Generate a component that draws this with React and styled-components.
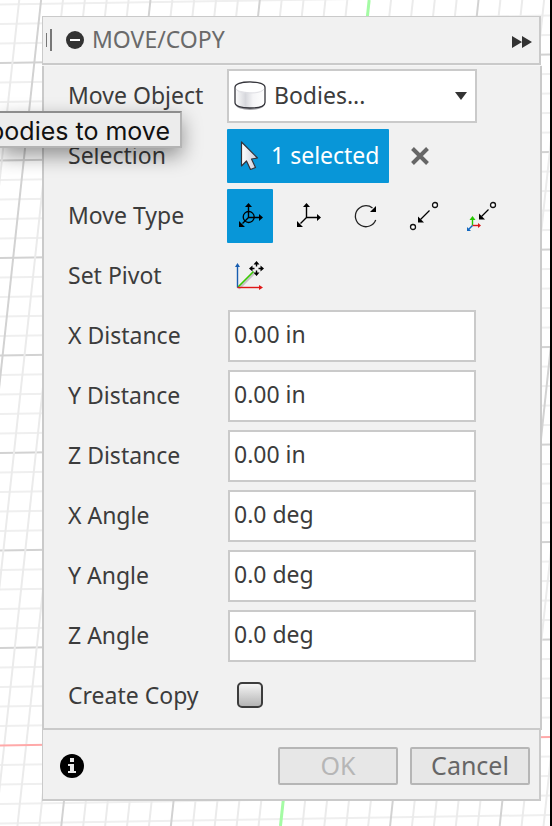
import React, { useId, useState } from "react";
import styled, { createGlobalStyle, css } from "styled-components";

const GlobalStyle = createGlobalStyle`
  *, *::before, *::after { box-sizing: border-box; }
  body {
    margin: 0;
    background: #fff;
    color: #3c3c3c;
    font-family: "Noto Sans", "Open Sans", sans-serif;
    font-size: 23px;
    line-height: 28px;
  }
  button, input, select { font: inherit; color: inherit; }
`;

const Workspace = styled.main`
  position: relative;
  min-height: 100vh;
  padding: 16px 8px 24px 42px;
  border-right: 2px solid #000;
  overflow: hidden;
`;

const GridBackdrop = styled.svg`
  position: absolute;
  inset: 0;
  width: 100%;
  height: 100%;
`;

const Panel = styled.section`
  position: relative;
  display: flex;
  flex-direction: column;
`;

const Header = styled.header`
  display: flex;
  align-items: center;
  height: 49px;
  margin-right: 1px;
  padding: 0 7px 0 3px;
  background: #f1f1f1;
  border: solid #cacaca;
  border-width: 1px 2px 2px 1px;
`;

const Title = styled.h1`
  flex: 1;
  margin: 0 0 0 8px;
  padding-bottom: 2px;
  color: #6a6a6a;
  font-size: 23px;
  font-weight: 400;
  line-height: 28px;
`;

const PlainButton = styled.button`
  display: flex;
  padding: 0;
  border: 0;
  background: none;
  cursor: pointer;
`;

const DockButton = styled(PlainButton)`
  padding-top: 3px;
`;

const Grip = styled.span`
  display: flex;
  align-items: center;
  width: 6px;
  height: 22px;
  margin-right: 14px;
  border-right: 2px solid #777;

  &::before {
    content: "";
    width: 1px;
    height: 14px;
    background: #777;
  }
`;

const Body = styled.div`
  display: flex;
  flex-direction: column;
  margin-top: 1px;
  padding: 0 63px 2px 24px;
  background: #f1f1f1;
  border: 2px solid #cacaca;
  border-top: 0;
  box-shadow: 0 -1px #f6f6f6;
`;

const Row = styled.div`
  display: grid;
  grid-template-columns: 159px minmax(0, 1fr);
  align-items: center;
  height: 60px;
`;

const RowLabel = styled.label`
  padding-bottom: 2px;
  white-space: nowrap;
`;

const Controls = styled.div`
  display: flex;
  align-items: center;
  gap: ${(p) => p.$gap || 0}px;
`;

const SelectFrame = styled.div`
  display: flex;
  align-items: center;
  flex: 1;
  height: 54px;
  padding: 0 8px 0 5px;
  background: #fff;
  border: 2px solid #cacaca;
`;

const Select = styled.select`
  flex: 1;
  min-width: 0;
  height: 100%;
  margin-left: 8px;
  padding: 0 0 2px;
  border: 0;
  background: transparent;
  appearance: none;
`;

const Field = styled.input`
  flex: 1;
  min-width: 0;
  height: 52px;
  margin: 0 1px;
  padding: 0 4px 4px;
  background: #fff;
  border: 2px solid #cacaca;
`;

const SelectionButton = styled.button`
  display: flex;
  align-items: center;
  gap: 10px;
  width: 162px;
  height: 54px;
  padding: 0 0 0 12px;
  border: 0;
  border-radius: 1px;
  background: #0896d8;
  color: #fff;
  white-space: nowrap;
`;

const SelectionText = styled.span`
  padding-bottom: 2px;
`;

const ToolButton = styled.button`
  display: flex;
  flex: none;
  align-items: center;
  justify-content: center;
  width: 46px;
  height: 54px;
  padding: 0;
  border: 0;
  border-radius: 1px;
  background: transparent;
  ${(p) => p.$active && css`background: #0896d8;`}
`;

const Checkbox = styled.input`
  appearance: none;
  width: 26px;
  height: 26px;
  margin: 0 0 2px 10px;
  border: 2px solid #3c3c3c;
  border-radius: 5px;
  background: linear-gradient(#f4f4f4, #b4b4b4);

  &:checked { background: #0896d8; }
`;

const Footer = styled.footer`
  display: flex;
  align-items: center;
  gap: 12px;
  height: 71px;
  margin-right: 1px;
  padding: 2px 9px 0 17px;
  background: #f1f1f1;
  border: solid #cacaca;
  border-width: 0 2px 2px 1px;
`;

const InfoButton = styled(PlainButton)`
  margin-right: auto;
`;

const FooterButton = styled.button`
  width: 120px;
  height: 38px;
  padding: 0 0 2px;
  border: 2px solid #b6b6b6;
  border-radius: 2px;
  background: #e7e7e7;
  color: #666;
  font-size: 25px;
  line-height: 32px;

  &:disabled { color: #b6b6b6; }
`;

const Tooltip = styled.div`
  position: absolute;
  top: 111px;
  left: 0;
  display: flex;
  justify-content: flex-end;
  width: 182px;
  height: 37px;
  padding: 2px 10px 0 0;
  background: #ececec;
  border: 2px solid #b4b4b4;
  border-top-color: #8d8d8d;
  border-left: 0;
  box-shadow: 0 8px 20px rgba(0, 0, 0, 0.4);
  color: #111;
  font-family: Inter, "Liberation Sans", sans-serif;
  font-size: 25px;
  line-height: 32px;
  white-space: nowrap;
`;

const gridRows = Array.from({ length: 45 }, (_, i) => i - 39);
const gridColumns = Array.from({ length: 32 }, (_, i) => i - 18);

function Perspective() {
  return (
    <GridBackdrop viewBox="0 0 552 826" preserveAspectRatio="none" aria-hidden="true">
      {gridRows.filter((k) => k !== 0).map((k) => (
        <path
          key={k}
          d={`M0 ${745.5 + 19.5 * k}L552 ${737 + 19.5 * k}`}
          stroke={k % 5 === 0 ? "#d2d2d2" : "#efefef"}
          strokeWidth="2"
        />
      ))}
      {gridColumns.filter((k) => k !== 0).map((k) => (
        <path
          key={k}
          d={`M${370.5 + 21.95 * k} 0L${281.5 + 22 * k} 826`}
          stroke={k % 5 === 0 ? "#d2d2d2" : "#ebebeb"}
          strokeWidth="2"
        />
      ))}
      <path d="M0 745.5L552 737" stroke="#ffa9a9" strokeWidth="2" />
      <path d="M370.5 0L281.5 826" stroke="#a4fba4" strokeWidth="3" />
    </GridBackdrop>
  );
}

const CollapseIcon = () => (
  <svg width="18" height="18" viewBox="0 0 18 18" aria-hidden="true">
    <circle cx="9" cy="9" r="9" fill="#333" />
    <path d="M4 9h10" stroke="#fff" strokeWidth="2" />
  </svg>
);

const ForwardIcon = () => (
  <svg width="20" height="12" viewBox="0 0 20 12" aria-hidden="true">
    <path d="M0 0l10 6-10 6zM10 0l10 6-10 6z" fill="#333" />
  </svg>
);

const BodyIcon = () => (
  <svg width="32" height="30" viewBox="0 0 32 30" aria-hidden="true">
    <defs>
      <linearGradient id="cylinder">
        <stop offset="0" stopColor="#fff" />
        <stop offset="0.35" stopColor="#d6d7dc" />
        <stop offset="0.6" stopColor="#f5f5f7" />
        <stop offset="1" stopColor="#fff" />
      </linearGradient>
    </defs>
    <ellipse cx="16" cy="24" rx="14" ry="5" fill="#a3a3a8" />
    <path d="M1 6.5C1 3 7 1 16 1s15 2 15 5.5v15C31 25 25 27 16 27S1 25 1 21.5z" fill="url(#cylinder)" stroke="#34343a" strokeWidth="1.3" />
    <ellipse cx="16" cy="6.5" rx="14" ry="4.7" fill="#fff" />
    <path d="M2 8c2 3 7 4 14 4s12-1 14-4" fill="none" stroke="#e1e1e6" />
  </svg>
);

const CursorIcon = () => (
  <svg width="22" height="30" viewBox="0 0 22 30" aria-hidden="true">
    <defs>
      <linearGradient id="cursor">
        <stop offset="0" stopColor="#fff" />
        <stop offset="1" stopColor="#c8cad8" />
      </linearGradient>
    </defs>
    <path d="M2.5 1v24l5-5 4 8.500 5-2-4-8.500 6-1z" fill="url(#cursor)" stroke="#32323a" strokeWidth="1.2" strokeLinejoin="round" />
  </svg>
);

const CloseIcon = () => (
  <svg width="18" height="18" viewBox="0 0 18 18" aria-hidden="true">
    <path d="M1.5 1.5l15 15M16.5 1.5l-15 15" stroke="#666" strokeWidth="4" />
  </svg>
);

const CaretIcon = () => (
  <svg width="12" height="8" viewBox="0 0 12 8" aria-hidden="true">
    <path d="M0 0h12L6 8z" fill="#333" />
  </svg>
);

const Axes = ({ ring }) => (
  <svg width="30" height="30" viewBox="0 0 30 30" aria-hidden="true">
    <g fill="none" stroke="#000" strokeWidth="1.4">
      <path d="M13.5 5v11.5H24M13.5 16.500l-6 6" />
      {ring && <circle cx="13.7" cy="16" r="5.5" strokeWidth="1.3" />}
    </g>
    <path d="M10 6l3.500-4L17 6zM24 13l4 3.500-4 3.500zM4 20v6h6z" />
  </svg>
);

const RotateIcon = () => (
  <svg width="30" height="30" viewBox="0 0 30 30" aria-hidden="true">
    <path d="M24.700 19A10.500 10.500 0 1 1 21.500 7" fill="none" stroke="#222" strokeWidth="1.3" />
    <path d="M25 5v6h-6z" />
  </svg>
);

const PointIcon = () => (
  <svg width="30" height="30" viewBox="0 0 30 30" aria-hidden="true">
    <circle cx="26" cy="4" r="2.5" fill="#fff" stroke="#111" strokeWidth="1.3" />
    <circle cx="4" cy="26" r="2.5" fill="#fff" stroke="#111" strokeWidth="1.3" />
    <path d="M20.500 9.500l-9 9" stroke="#000" strokeWidth="1.2" />
    <path d="M9 15.500v6h6z" />
  </svg>
);

const PointPositionIcon = () => (
  <svg width="30" height="30" viewBox="0 0 30 30" aria-hidden="true">
    <circle cx="26" cy="4" r="2.5" fill="#fff" stroke="#111" strokeWidth="1.3" />
    <path d="M21.500 8.500l-7 7" stroke="#000" strokeWidth="1.2" />
    <path d="M12 12.500v6h6z" />
    <path d="M5.500 24.500V18" stroke="#26c800" strokeWidth="1.4" />
    <path d="M2.500 19l3-4 3 4z" fill="#26c800" />
    <path d="M5.500 24.500H11" stroke="#d91717" strokeWidth="1.4" />
    <path d="M11 22l3 2.500-3 2.500z" fill="#d91717" />
    <path d="M5.500 24.500l-4 4" stroke="#1468c0" strokeWidth="1.4" />
    <path d="M0 26v4h4z" fill="#1468c0" />
  </svg>
);

const PivotIcon = () => (
  <svg width="32" height="32" viewBox="0 0 32 32" aria-hidden="true">
    <path d="M4.500 28.500L20 13" stroke="#c4c4c4" strokeWidth="3" />
    <path d="M3.500 27.500L19.500 11.500" stroke="#38cc00" strokeWidth="1.6" />
    <path d="M3.500 27.500V6" stroke="#175db0" strokeWidth="1.4" />
    <path d="M1 7l2.500-4L6 7z" fill="#175db0" />
    <path d="M3.500 27.500H26" stroke="#df1717" strokeWidth="1.4" />
    <path d="M25 25l4 2.500-4 2.500z" fill="#df1717" />
    <path d="M22.500 3v3.500M22.500 10.500V14M17 8.500h3.500M24.500 8.500H28" stroke="#000" strokeWidth="1.4" />
    <path d="M19.500 4.500l3-3.500 3 3.500zM19.500 12.500l3 3.500 3-3.500zM18.500 5.500v6L15 8.500zM26.500 5.500v6l3.500-3z" />
  </svg>
);

const InfoIcon = () => (
  <svg width="24" height="24" viewBox="0 0 24 24" aria-hidden="true">
    <circle cx="12" cy="12" r="12" fill="#000" />
    <path d="M10 4h4v4h-4zM8 10h6v7h2v2H8v-2h2v-5H8z" fill="#e8e8e8" />
  </svg>
);

const moveTypes = [
  { name: "Free Move", icon: <Axes ring /> },
  { name: "Translate", icon: <Axes /> },
  { name: "Rotate", icon: <RotateIcon /> },
  { name: "Point to Point", icon: <PointIcon /> },
  { name: "Point to Position", icon: <PointPositionIcon /> },
];

const measures = [
  ["X Distance", "0.00 in"],
  ["Y Distance", "0.00 in"],
  ["Z Distance", "0.00 in"],
  ["X Angle", "0.0 deg"],
  ["Y Angle", "0.0 deg"],
  ["Z Angle", "0.0 deg"],
];

function MeasureRow({ label, value }) {
  const id = useId();
  return (
    <Row>
      <RowLabel htmlFor={id}>{label}</RowLabel>
      <Controls>
        <Field id={id} type="text" defaultValue={value} />
      </Controls>
    </Row>
  );
}

export default function App() {
  const [moveType, setMoveType] = useState("Free Move");
  return (
    <Workspace>
      <GlobalStyle />
      <Perspective />
      <Panel aria-labelledby="panel-title">
        <Header>
          <Grip />
          <PlainButton type="button" aria-label="Collapse"><CollapseIcon /></PlainButton>
          <Title id="panel-title">MOVE/COPY</Title>
          <DockButton type="button" aria-label="Dock panel"><ForwardIcon /></DockButton>
        </Header>
        <Body>
          <Row>
            <RowLabel htmlFor="move-object">Move Object</RowLabel>
            <Controls>
              <SelectFrame>
                <BodyIcon />
                <Select id="move-object"><option>Bodies...</option></Select>
                <CaretIcon />
              </SelectFrame>
            </Controls>
          </Row>
          <Row>
            <RowLabel htmlFor="selection">Selection</RowLabel>
            <Controls $gap={22}>
              <SelectionButton id="selection" type="button">
                <CursorIcon />
                <SelectionText>1 selected</SelectionText>
              </SelectionButton>
              <PlainButton type="button" aria-label="Clear selection"><CloseIcon /></PlainButton>
            </Controls>
          </Row>
          <Row>
            <RowLabel as="span" id="move-type">Move Type</RowLabel>
            <Controls $gap={12} role="group" aria-labelledby="move-type">
              {moveTypes.map(({ name, icon }) => (
                <ToolButton
                  key={name}
                  type="button"
                  aria-label={name}
                  aria-pressed={moveType === name}
                  $active={moveType === name}
                  onClick={() => setMoveType(name)}
                >
                  {icon}
                </ToolButton>
              ))}
            </Controls>
          </Row>
          <Row>
            <RowLabel htmlFor="set-pivot">Set Pivot</RowLabel>
            <Controls>
              <ToolButton id="set-pivot" type="button" aria-label="Set Pivot"><PivotIcon /></ToolButton>
            </Controls>
          </Row>
          {measures.map(([label, value]) => <MeasureRow key={label} label={label} value={value} />)}
          <Row>
            <RowLabel htmlFor="create-copy">Create Copy</RowLabel>
            <Controls><Checkbox id="create-copy" type="checkbox" /></Controls>
          </Row>
        </Body>
        <Footer>
          <InfoButton type="button" aria-label="Information"><InfoIcon /></InfoButton>
          <FooterButton type="button" disabled>OK</FooterButton>
          <FooterButton type="button">Cancel</FooterButton>
        </Footer>
      </Panel>
      <Tooltip role="tooltip">bodies to move</Tooltip>
    </Workspace>
  );
}
